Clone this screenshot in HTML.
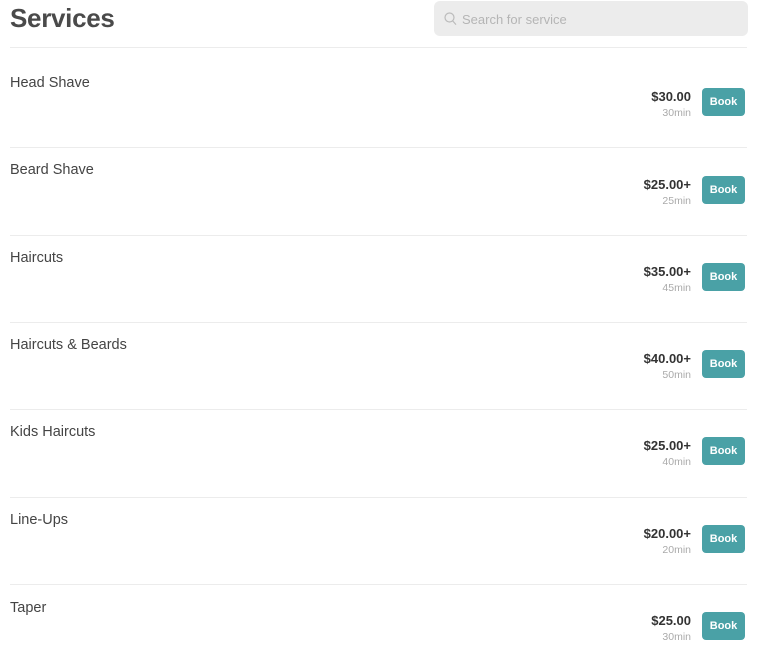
<!DOCTYPE html>
<html><head><style>
body{margin:0;width:768px;height:666px;background:#fff;font-family:"Liberation Sans",sans-serif;position:relative;overflow:hidden;color:#444}
h1{position:absolute;left:10px;top:3px;margin:0;font-size:26px;font-weight:bold;color:#4a4a4a;letter-spacing:-0.3px}
.search{position:absolute;left:434px;top:1px;width:314px;height:35px;background:#ececec;border-radius:6px}
.search span{position:absolute;left:28px;top:11px;font-size:13px;color:#b5b5b5}
.hr{position:absolute;left:10px;width:737px;height:1px;background:#ececec}
.name{position:absolute;left:10px;font-size:14.5px;color:#444}
.price{position:absolute;right:77px;font-size:13px;font-weight:bold;color:#333;text-align:right}
.dur{position:absolute;right:77px;font-size:10.5px;color:#aaa;text-align:right}
.btn{position:absolute;left:702px;width:43px;height:28px;background:#4aa1a6;border-radius:4px;color:#fff;font-size:11px;font-weight:bold;text-align:center;line-height:28px}
</style></head><body>
<h1>Services</h1>
<div class="search"><svg style="position:absolute;left:10px;top:11px" width="13" height="14" viewBox="0 0 13 14"><circle cx="5.5" cy="5.5" r="4.5" fill="none" stroke="#bbb" stroke-width="1.2"/><line x1="8.8" y1="9" x2="12" y2="12.6" stroke="#bbb" stroke-width="1.2"/></svg><span>Search for service</span></div>
<div class="hr" style="top:47px"></div>
<div class="name" style="top:75px">Head Shave</div><div class="price" style="top:89px">$30.00</div><div class="dur" style="top:107px">30min</div><div class="btn" style="top:88px">Book</div>
<div class="hr" style="top:147px"></div>
<div class="name" style="top:162px">Beard Shave</div><div class="price" style="top:177px">$25.00+</div><div class="dur" style="top:195px">25min</div><div class="btn" style="top:176px">Book</div>
<div class="hr" style="top:235px"></div>
<div class="name" style="top:250px">Haircuts</div><div class="price" style="top:264px">$35.00+</div><div class="dur" style="top:282px">45min</div><div class="btn" style="top:263px">Book</div>
<div class="hr" style="top:322px"></div>
<div class="name" style="top:337px">Haircuts &amp; Beards</div><div class="price" style="top:351px">$40.00+</div><div class="dur" style="top:369px">50min</div><div class="btn" style="top:350px">Book</div>
<div class="hr" style="top:409px"></div>
<div class="name" style="top:424px">Kids Haircuts</div><div class="price" style="top:438px">$25.00+</div><div class="dur" style="top:456px">40min</div><div class="btn" style="top:437px">Book</div>
<div class="hr" style="top:497px"></div>
<div class="name" style="top:512px">Line-Ups</div><div class="price" style="top:526px">$20.00+</div><div class="dur" style="top:544px">20min</div><div class="btn" style="top:525px">Book</div>
<div class="hr" style="top:584px"></div>
<div class="name" style="top:600px">Taper</div><div class="price" style="top:613px">$25.00</div><div class="dur" style="top:631px">30min</div><div class="btn" style="top:612px">Book</div>
</body></html>
